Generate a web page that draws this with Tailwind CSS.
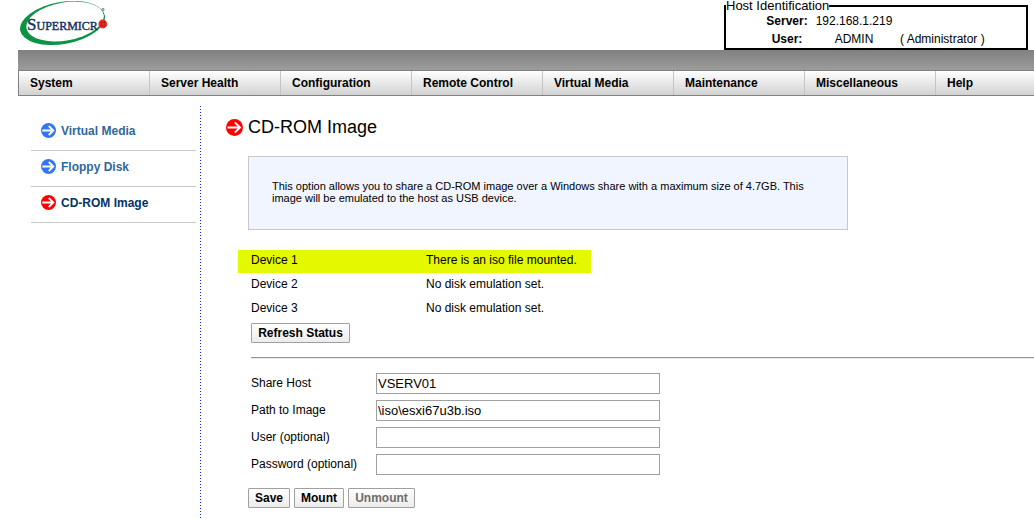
<!DOCTYPE html>
<html lang="en">
<head>
    <meta charset="UTF-8">
    <meta name="viewport" content="width=device-width, initial-scale=1.0">
    <title>CD-ROM Image</title>
    <script src="https://cdn.jsdelivr.net/npm/@tailwindcss/browser@4"></script>
</head>
<body class="flex min-h-screen flex-col bg-white font-['Liberation_Sans',Arial,sans-serif] text-xs text-black">
    <svg class="hidden">
        <symbol id="arrow" viewBox="0 0 17 17">
            <circle cx="8.5" cy="8.5" r="8.5" fill="currentColor" />
            <path d="M1.5 8.5H14M8.8 3.4L14 8.5L8.8 13.6" fill="none" stroke="#fff" stroke-width="2" />
        </symbol>
    </svg>

    <header class="flex h-[50px] items-start justify-between pl-[18px] pr-[6px]">
        <svg class="h-[48px] w-[92px]" viewBox="0 0 92 48" role="img" aria-label="Supermicro">
            <g transform="rotate(-10 44.5 23)">
                <ellipse cx="44.5" cy="23" rx="43" ry="21" fill="#0a9444" />
                <ellipse cx="47.3" cy="22" rx="39.2" ry="19" fill="#fff" />
            </g>
            <text x="9" y="30" font-family="Liberation Serif, serif" font-size="17" fill="#14305f" stroke="#14305f" stroke-width="0.4">S<tspan font-size="12">UPERMICR</tspan></text>
            <circle cx="84.8" cy="24" r="4.4" fill="#ee2a20" />
            <path d="M81.500 22.500h6.500M81.500 25.500h6.500M83.300 20.500v7M86.300 20.500v7" stroke="#b3150f" stroke-width="0.6" />
            <circle cx="85" cy="9.500" r="1.200" fill="#b9c6da" stroke="#5b7299" stroke-width="0.7" />
        </svg>
        <fieldset class="h-[50px] w-[304px] border-2 border-black">
            <legend class="text-[13px] leading-3">Host Identification</legend>
            <table class="ml-[38px] text-center leading-[18px]">
                <tr>
                    <th class="w-[46px] font-bold">Server:</th>
                    <td class="w-[88px]">192.168.1.219</td>
                    <td></td>
                </tr>
                <tr>
                    <th class="font-bold">User:</th>
                    <td>ADMIN</td>
                    <td class="pl-[2px]">( Administrator )</td>
                </tr>
            </table>
        </fieldset>
    </header>

    <div class="ml-[18px] h-5 bg-linear-to-b from-[#808080] to-[#9c9c9c]"></div>
    <nav class="ml-[18px] flex h-[26px] border-y border-l border-[#808080] bg-linear-to-b from-white to-[#d2d2d2] font-bold leading-6">
        <a href="#" class="w-[131px] border-r border-[#c4c4c4] pl-[11px]">System</a>
        <a href="#" class="w-[131px] border-r border-[#c4c4c4] pl-[11px]">Server Health</a>
        <a href="#" class="w-[131px] border-r border-[#c4c4c4] pl-[11px]">Configuration</a>
        <a href="#" class="w-[131px] border-r border-[#c4c4c4] pl-[11px]">Remote Control</a>
        <a href="#" class="w-[131px] border-r border-[#c4c4c4] pl-[11px]">Virtual Media</a>
        <a href="#" class="w-[131px] border-r border-[#c4c4c4] pl-[11px]">Maintenance</a>
        <a href="#" class="w-[131px] border-r border-[#c4c4c4] pl-[11px]">Miscellaneous</a>
        <a href="#" class="pl-[11px]">Help</a>
    </nav>

    <div class="mt-[10px] flex flex-1">
        <aside class="w-[200px] shrink-0 pl-[31px] pr-1 pt-[9px] font-bold text-[#336699]">
            <a href="#" class="flex h-9 items-center gap-[5px] border-b border-[#c8c8c8] pb-1 pl-[10px]">
                <svg class="size-[15px] text-[#3377ee]"><use href="#arrow" /></svg>Virtual Media
            </a>
            <a href="#" class="flex h-9 items-center gap-[5px] border-b border-[#c8c8c8] pb-1 pl-[10px]">
                <svg class="size-[15px] text-[#3377ee]"><use href="#arrow" /></svg>Floppy Disk
            </a>
            <a href="#" class="flex h-9 items-center gap-[5px] border-b border-[#c8c8c8] pb-1 pl-[10px] text-[#003366]">
                <svg class="size-[15px] text-[#ff0000]"><use href="#arrow" /></svg>CD-ROM Image
            </a>
        </aside>
        <div class="w-px shrink-0 bg-[repeating-linear-gradient(#0a32e6_0_1px,transparent_1px_3px)]"></div>

        <main class="flex-1 pl-[25px] pt-[10px]">
            <h1 class="flex h-[22px] items-center gap-[5px] text-lg">
                <svg class="size-[17px] text-[#ff0000]"><use href="#arrow" /></svg>CD-ROM Image
            </h1>

            <div class="ml-[22px] mt-[18px] h-[74px] max-w-[600px] border border-[#c8c8c8] bg-[#f1f5ff] px-[23px] pt-[23px] text-[11px] leading-3">
                This option allows you to share a CD-ROM image over a Windows share with a maximum size of 4.7GB. This image will be emulated to the host as USB device.
            </div>

            <table class="ml-3 mt-5 w-[353px] border-separate border-spacing-0 leading-5">
                <tr class="bg-[#e4f800]">
                    <td class="h-6 w-[188px] border-b border-white pl-[13px] align-top">Device 1</td>
                    <td class="border-b border-white align-top">There is an iso file mounted.</td>
                </tr>
                <tr>
                    <td class="h-6 pl-[13px] align-top">Device 2</td>
                    <td class="align-top">No disk emulation set.</td>
                </tr>
                <tr>
                    <td class="h-6 pl-[13px] align-top">Device 3</td>
                    <td class="align-top">No disk emulation set.</td>
                </tr>
            </table>
            <button type="button" class="ml-[25px] mt-px block h-5 w-[99px] rounded-[1px] border border-[#a0a0a0] bg-linear-to-b from-white to-[#ececec] font-bold leading-[18px]">Refresh Status</button>

            <hr class="ml-[25px] mt-[14px] h-[2px] border-b border-b-[#e8e8e8] border-t-[#969696]">

            <form class="mt-[14px]">
                <div class="ml-[25px] grid grid-cols-[125px_284px] gap-y-[6px] leading-5">
                    <label for="host">Share Host</label>
                    <input id="host" type="text" value="VSERV01" class="h-[21px] border border-[#a0a0a0] bg-white px-px text-[13px]">
                    <label for="path">Path to Image</label>
                    <input id="path" type="text" value="\iso\esxi67u3b.iso" class="h-[21px] border border-[#a0a0a0] bg-white px-px text-[13px]">
                    <label for="user">User (optional)</label>
                    <input id="user" type="text" class="h-[21px] border border-[#a0a0a0] bg-white px-px text-[13px]">
                    <label for="pwd">Password (optional)</label>
                    <input id="pwd" type="password" class="h-[21px] border border-[#a0a0a0] bg-white px-px text-[13px]">
                </div>
                <div class="ml-[22px] mt-[13px] flex gap-1 leading-[18px]">
                    <button type="button" class="h-5 w-[42px] rounded-[1px] border border-[#a0a0a0] bg-linear-to-b from-white to-[#ececec] font-bold">Save</button>
                    <button type="button" class="h-5 w-[50px] rounded-[1px] border border-[#a0a0a0] bg-linear-to-b from-white to-[#ececec] font-bold">Mount</button>
                    <button type="button" disabled class="h-5 w-[67px] rounded-[1px] border border-[#a0a0a0] bg-linear-to-b from-white to-[#ececec] font-bold text-[#6d6d6d]">Unmount</button>
                </div>
            </form>
        </main>
    </div>
</body>
</html>
